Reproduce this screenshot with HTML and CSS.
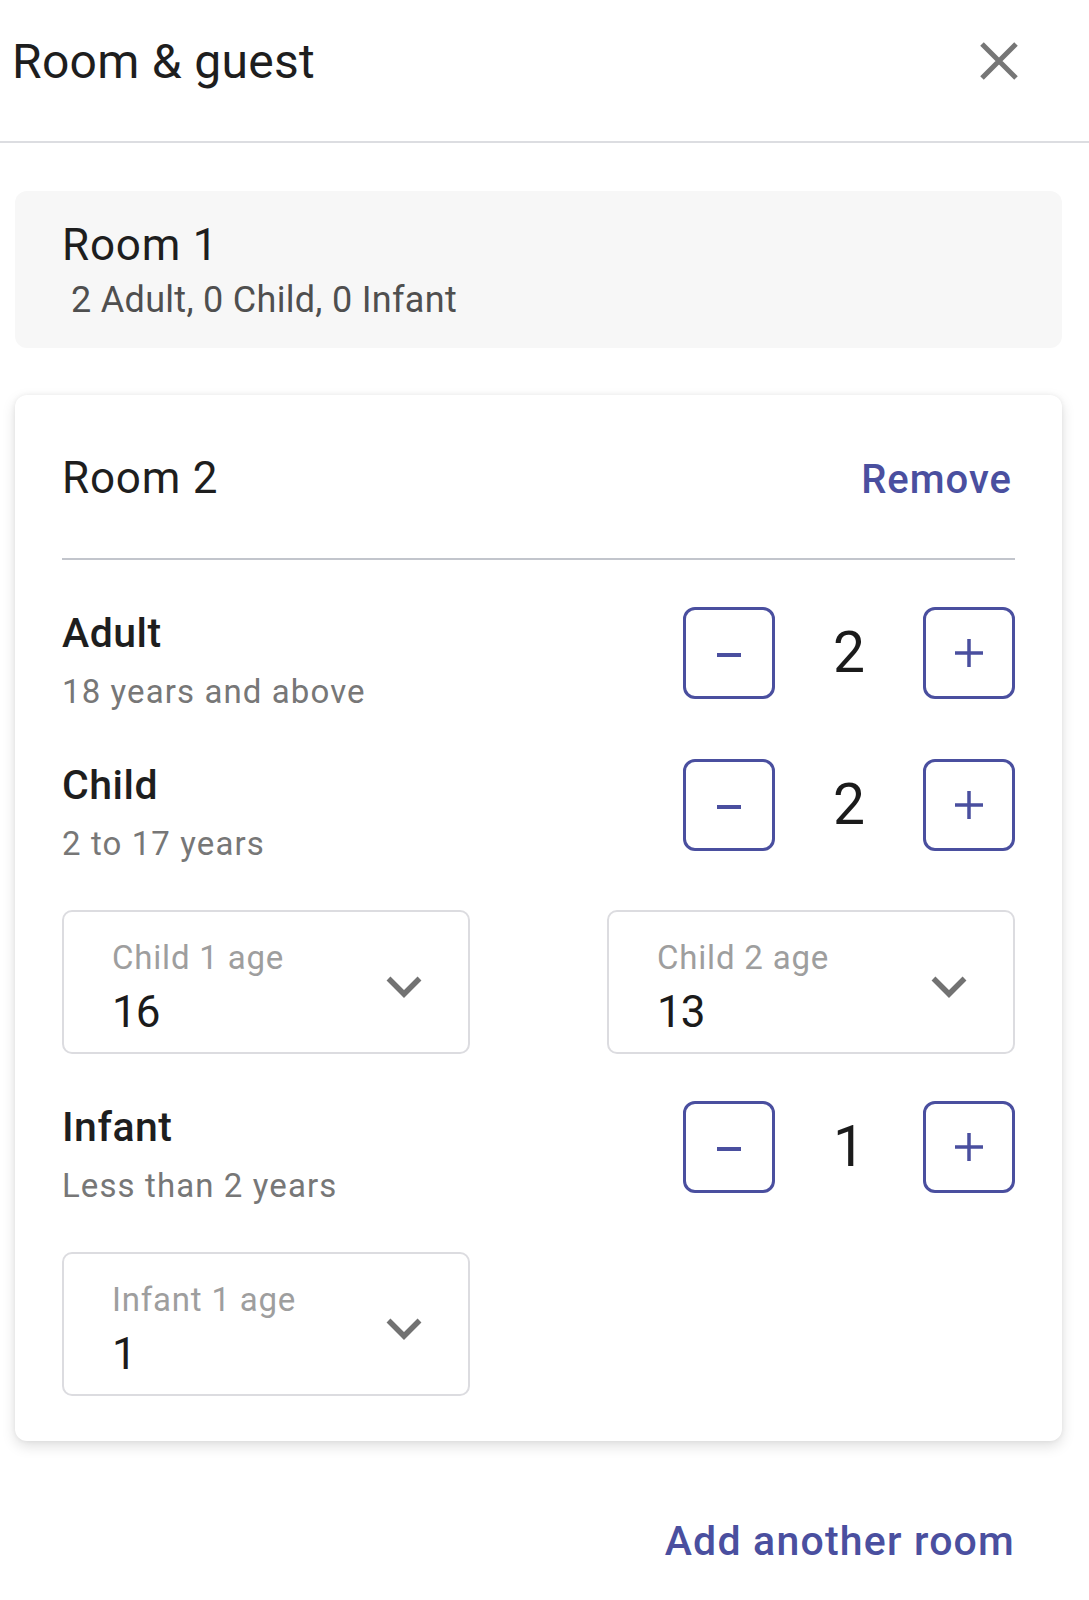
FILE: index.html
```html
<!DOCTYPE html>
<html lang="en">
<head>
<meta charset="utf-8">
<title>Room &amp; guest</title>
<link rel="stylesheet" href="styles.css">
</head>
<body>
<div class="sheet">
  <header class="top">
    <h1 class="title">Room &amp; guest</h1>
    <button class="close" aria-label="Close">
      <svg width="40" height="40" viewBox="0 0 40 40"><path d="M3 3 L37 37 M37 3 L3 37" stroke="#767676" stroke-width="5" fill="none"/></svg>
    </button>
  </header>

  <main class="rooms">
    <section class="room room-collapsed">
      <div class="room-name">Room 1</div>
      <div class="room-summary">2 Adult, 0 Child, 0 Infant</div>
    </section>

    <section class="room room-open">
      <div class="room-head">
        <div class="room-name">Room 2</div>
        <a class="link remove" href="#">Remove</a>
      </div>
      <div class="room-rule"></div>

      <div class="room-body">
        <div class="guest-row">
          <div class="guest-info">
            <div class="guest-label">Adult</div>
            <div class="guest-sub">18 years and above</div>
          </div>
          <div class="counter">
            <button class="step" aria-label="Decrease"><svg width="24" height="4" viewBox="0 0 24 4"><rect x="0" y="0" width="24" height="4" fill="#4a4f9f"/></svg></button>
            <div class="count">2</div>
            <button class="step" aria-label="Increase"><svg width="28" height="28" viewBox="0 0 28 28"><rect x="0" y="12.25" width="28" height="3.5" fill="#4a4f9f"/><rect x="12.25" y="0" width="3.5" height="28" fill="#4a4f9f"/></svg></button>
          </div>
        </div>

        <div class="guest-row">
          <div class="guest-info">
            <div class="guest-label">Child</div>
            <div class="guest-sub">2 to 17 years</div>
          </div>
          <div class="counter">
            <button class="step" aria-label="Decrease"><svg width="24" height="4" viewBox="0 0 24 4"><rect x="0" y="0" width="24" height="4" fill="#4a4f9f"/></svg></button>
            <div class="count">2</div>
            <button class="step" aria-label="Increase"><svg width="28" height="28" viewBox="0 0 28 28"><rect x="0" y="12.25" width="28" height="3.5" fill="#4a4f9f"/><rect x="12.25" y="0" width="3.5" height="28" fill="#4a4f9f"/></svg></button>
          </div>
        </div>

        <div class="age-grid">
          <div class="age-select">
            <div class="age-text">
              <div class="age-label">Child 1 age</div>
              <div class="age-value">16</div>
            </div>
            <svg class="chev" width="36" height="22" viewBox="0 0 36 22"><polyline points="2.5,2.5 18,18 33.5,2.5" fill="none" stroke="#727272" stroke-width="5.5"/></svg>
          </div>
          <div class="age-select">
            <div class="age-text">
              <div class="age-label">Child 2 age</div>
              <div class="age-value">13</div>
            </div>
            <svg class="chev" width="36" height="22" viewBox="0 0 36 22"><polyline points="2.5,2.5 18,18 33.5,2.5" fill="none" stroke="#727272" stroke-width="5.5"/></svg>
          </div>
        </div>

        <div class="guest-row">
          <div class="guest-info">
            <div class="guest-label">Infant</div>
            <div class="guest-sub">Less than 2 years</div>
          </div>
          <div class="counter">
            <button class="step" aria-label="Decrease"><svg width="24" height="4" viewBox="0 0 24 4"><rect x="0" y="0" width="24" height="4" fill="#4a4f9f"/></svg></button>
            <div class="count">1</div>
            <button class="step" aria-label="Increase"><svg width="28" height="28" viewBox="0 0 28 28"><rect x="0" y="12.25" width="28" height="3.5" fill="#4a4f9f"/><rect x="12.25" y="0" width="3.5" height="28" fill="#4a4f9f"/></svg></button>
          </div>
        </div>

        <div class="age-grid">
          <div class="age-select">
            <div class="age-text">
              <div class="age-label">Infant 1 age</div>
              <div class="age-value">1</div>
            </div>
            <svg class="chev" width="36" height="22" viewBox="0 0 36 22"><polyline points="2.5,2.5 18,18 33.5,2.5" fill="none" stroke="#727272" stroke-width="5.5"/></svg>
          </div>
        </div>
      </div>
    </section>

    <div class="add-row">
      <a class="link add" href="#">Add another room</a>
    </div>
  </main>
</div>
</body>
</html>
```

FILE: styles.css
```css
* { box-sizing: border-box; }

html, body {
  margin: 0;
  padding: 0;
  background: #ffffff;
}

body {
  font-family: Roboto, "Liberation Sans", Arial, sans-serif;
  color: #1c1c1c;
}

.sheet {
  width: 1089px;
}

/* Header */
.top {
  display: flex;
  justify-content: space-between;
  align-items: flex-start;
  height: 143px;
  padding: 34px 70px 0 12px;
  border-bottom: 2px solid #dcdde1;
}

.title {
  margin: 0;
  font-size: 48px;
  line-height: 56px;
  font-weight: 400;
  color: #1e1e1e;
  letter-spacing: 0.3px;
}

.close {
  margin-top: 7px;
  padding: 0;
  border: 0;
  background: none;
  width: 40px;
  height: 40px;
  display: block;
}
.close svg { display: block; }

/* Rooms */
.rooms {
  padding: 48px 27px 0 15px;
}

.room {
  border-radius: 12px;
  padding-left: 47px;
  padding-right: 47px;
}

.room-name {
  font-size: 44px;
  line-height: 52px;
  font-weight: 400;
  color: #1e1e1e;
  letter-spacing: 0.8px;
}

.room-collapsed {
  background: #f7f7f7;
  padding-top: 28px;
  padding-bottom: 26px;
  height: 157px;
}

.room-summary {
  margin-top: 7px;
  padding-left: 9px;
  font-size: 36px;
  line-height: 44px;
  color: #4f4f4f;
  letter-spacing: 0.3px;
}

.room-open {
  margin-top: 47px;
  background: #ffffff;
  padding-top: 57px;
  padding-bottom: 45px;
  box-shadow: 0 5px 14px rgba(0, 0, 0, 0.13), 0 0 5px rgba(0, 0, 0, 0.06);
}

.room-head {
  display: flex;
  justify-content: space-between;
  align-items: baseline;
}

.link {
  color: #4a4f9f;
  text-decoration: none;
  font-weight: 500;
}

.remove {
  font-size: 40px;
  line-height: 52px;
  letter-spacing: 1px;
  margin-right: 3px;
}

.room-rule {
  margin-top: 52px;
  height: 2px;
  background: #c2c5cc;
}

.room-body {
  margin-top: 47px;
  display: flex;
  flex-direction: column;
  gap: 46.5px;
}

/* Guest rows */
.guest-row {
  display: flex;
  justify-content: space-between;
  align-items: flex-start;
}

.guest-info {
  padding-top: 4px;
}

.guest-label {
  font-size: 41px;
  line-height: 44px;
  font-weight: 500;
  color: #1e1e1e;
  letter-spacing: 0.5px;
}

.guest-sub {
  margin-top: 17px;
  font-size: 33px;
  line-height: 40px;
  color: #777777;
  letter-spacing: 1.1px;
}

.counter {
  display: flex;
  align-items: center;
}

.step {
  width: 92px;
  height: 92px;
  border: 3px solid #4a4f9f;
  border-radius: 12px;
  background: #ffffff;
  padding: 0;
  display: flex;
  align-items: center;
  justify-content: center;
}
.step svg { display: block; }
.step:first-child svg { margin-top: 4px; }

.count {
  width: 148px;
  text-align: center;
  font-size: 57px;
  line-height: 64px;
  color: #1b1b1b;
}

/* Age selects */
.age-grid {
  display: grid;
  grid-template-columns: 408px 408px;
  justify-content: space-between;
}

.age-select {
  height: 144px;
  border: 2px solid #dcdce0;
  border-radius: 10px;
  padding: 26px 46px 0 48px;
  display: flex;
  justify-content: space-between;
  align-items: flex-start;
}

.age-label {
  font-size: 33px;
  line-height: 40px;
  color: #9e9e9e;
  letter-spacing: 0.8px;
}

.age-value {
  margin-top: 10px;
  font-size: 44px;
  line-height: 48px;
  color: #1b1b1b;
  letter-spacing: -1px;
}

.chev {
  display: block;
  margin-top: 38px;
}

/* Add room */
.add-row {
  display: flex;
  justify-content: flex-end;
  padding-right: 47px;
  margin-top: 76px;
}

.add {
  font-size: 41px;
  line-height: 48px;
  letter-spacing: 1.2px;
}
```
